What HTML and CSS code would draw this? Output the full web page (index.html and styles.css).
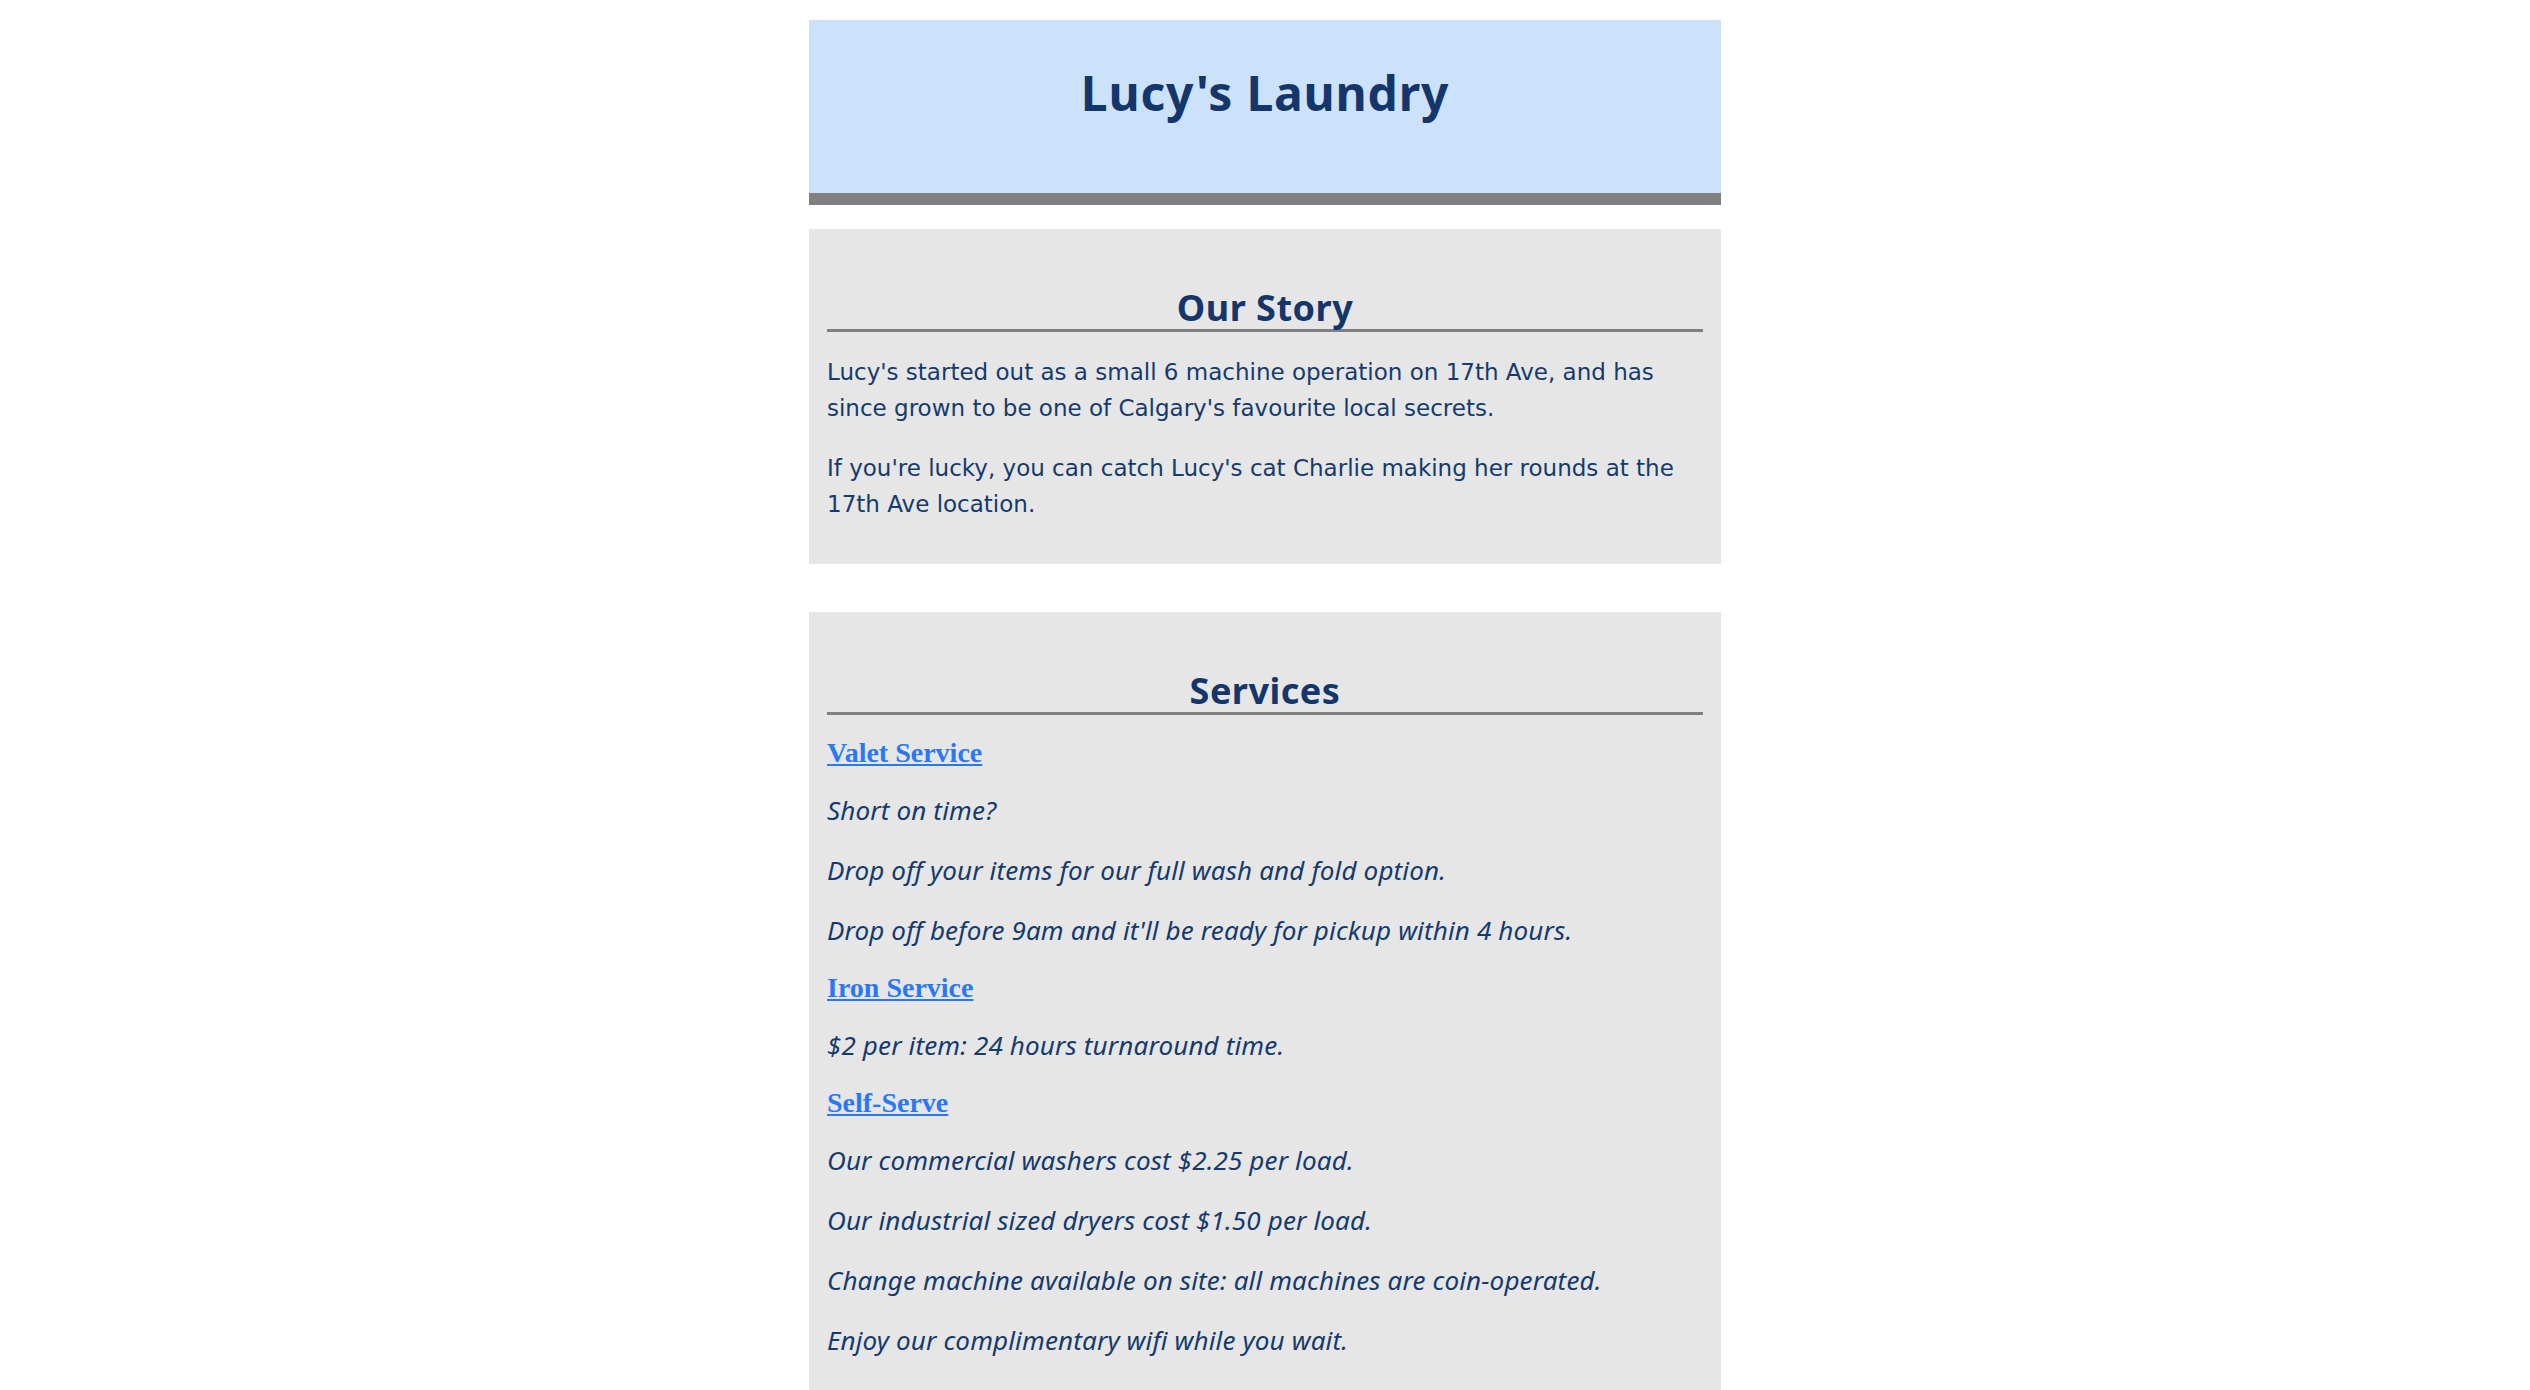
FILE: index.html
```html
<!DOCTYPE html>
<html lang="en">
<head>
<meta charset="utf-8">
<title>Lucy's Laundry</title>
<link rel="stylesheet" href="styles.css">
</head>
<body>
<div class="page">
  <header class="masthead">
    <h1 class="site-title">Lucy's Laundry</h1>
  </header>

  <section class="panel">
    <h2 class="panel-title">Our Story</h2>
    <p class="text">Lucy's started out as a small 6 machine operation on 17th Ave, and has since grown to be one of Calgary's favourite local secrets.</p>
    <p class="text">If you're lucky, you can catch Lucy's cat Charlie making her rounds at the 17th Ave location.</p>
  </section>

  <section class="panel panel-services">
    <h2 class="panel-title">Services</h2>
    <h3 class="service"><a href="#valet">Valet Service</a></h3>
    <p class="text note">Short on time?</p>
    <p class="text note">Drop off your items for our full wash and fold option.</p>
    <p class="text note">Drop off before 9am and it'll be ready for pickup within 4 hours.</p>
    <h3 class="service"><a href="#iron">Iron Service</a></h3>
    <p class="text note">$2 per item: 24 hours turnaround time.</p>
    <h3 class="service"><a href="#self">Self-Serve</a></h3>
    <p class="text note">Our commercial washers cost $2.25 per load.</p>
    <p class="text note">Our industrial sized dryers cost $1.50 per load.</p>
    <p class="text note">Change machine available on site: all machines are coin-operated.</p>
    <p class="text note">Enjoy our complimentary wifi while you wait.</p>
  </section>
</div>
</body>
</html>
```

FILE: styles.css
```css
html, body {
  margin: 0;
  padding: 0;
  background: #ffffff;
}

body {
  font-family: "Noto Sans", "DejaVu Sans", sans-serif;
  font-size: 24px;
  color: #153a6e;
}

.page {
  width: 912px;
  margin: 20px auto 0;
}

.masthead {
  background: #cce1fa;
  border-bottom: 12px solid #808080;
  padding: 45px 0 72px;
  margin-bottom: 24px;
}

.site-title {
  margin: 0;
  text-align: center;
  font-size: 48px;
  line-height: 56px;
  font-weight: 700;
  letter-spacing: 0.8px;
  color: #14366b;
}

.panel {
  background: #e6e6e6;
  padding: 18px 18px 18px;
  margin-bottom: 48px;
}

.panel-title {
  margin: 40px 0 22px;
  text-align: center;
  font-size: 36px;
  line-height: 42px;
  font-weight: 700;
  letter-spacing: 0.5px;
  color: #14366b;
  border-bottom: 3px solid #808080;
}

.text {
  margin: 0 0 24px;
  font-family: "DejaVu Sans", "Noto Sans", sans-serif;
  font-size: 23px;
  line-height: 36px;
}

.note {
  font-family: "Noto Sans", "DejaVu Sans", sans-serif;
  font-size: 26px;
  font-style: italic;
  letter-spacing: 0.15px;
}

.service {
  margin: 0 0 23px;
  font-family: "Liberation Serif", "Times New Roman", serif;
  font-size: 28px;
  line-height: 32px;
  font-weight: 700;
}

.service a {
  color: #2a78f8;
  text-decoration: underline;
}
```
